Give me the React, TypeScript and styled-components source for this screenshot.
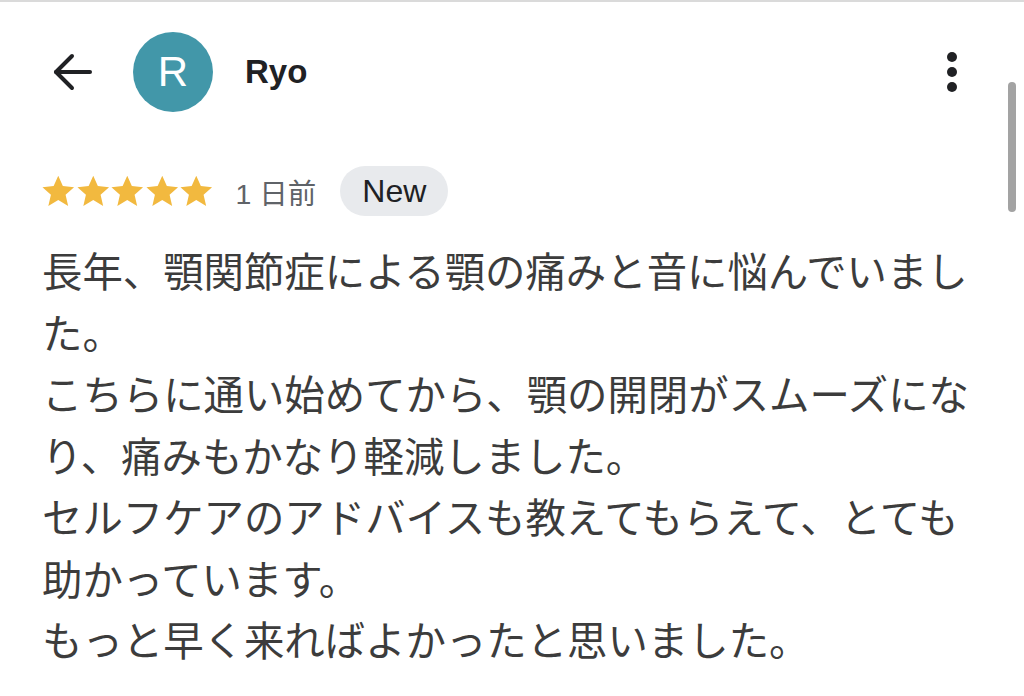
import styled, { createGlobalStyle } from "styled-components";

const GlobalStyle = createGlobalStyle`
  html, body {
    margin: 0;
    padding: 0;
    background: #ffffff;
  }
  body {
    font-family: "Liberation Sans", "Noto Sans CJK JP", sans-serif;
  }
`;

const reviewLines = [
  "長年、顎関節症による顎の痛みと音に悩んでいました。",
  "こちらに通い始めてから、顎の開閉がスムーズになり、痛みもかなり軽減しました。",
  "セルフケアのアドバイスも教えてもらえて、とても助かっています。",
  "もっと早く来ればよかったと思いました。",
];

function Star() {
  return (
    <StarIcon viewBox="0 0 24 24" aria-hidden>
      <path d="M12 1.2l3.2 7.2 7.8.8-5.9 5.2 1.8 7.8L12 18.1l-6.9 4.1 1.8-7.8L1 9.2l7.8-.8z" />
    </StarIcon>
  );
}

export default function App() {
  return (
    <>
      <GlobalStyle />
      <Page>
        <Header>
          <BackButton aria-label="戻る">
            <svg viewBox="0 0 40 40" width="40" height="40" fill="none" stroke="#202124" strokeWidth="4" strokeLinecap="round" strokeLinejoin="round">
              <path d="M38 20H4" />
              <path d="M20 4L4 20l16 16" />
            </svg>
          </BackButton>
          <Avatar>R</Avatar>
          <UserName>Ryo</UserName>
          <MenuButton aria-label="メニュー">
            <Dot />
            <Dot />
            <Dot />
          </MenuButton>
        </Header>

        <MetaRow>
          <Stars>
            {[0, 1, 2, 3, 4].map((i) => (
              <Star key={i} />
            ))}
          </Stars>
          <PostedAt>1 日前</PostedAt>
          <NewBadge>New</NewBadge>
        </MetaRow>

        <ReviewText>
          {reviewLines.map((line) => (
            <p key={line}>{line}</p>
          ))}
        </ReviewText>

        <ScrollThumb />
      </Page>
    </>
  );
}

const Page = styled.div`
  position: relative;
  width: 1024px;
  height: 696px;
  overflow: hidden;
  box-sizing: border-box;
  border-top: 2px solid #dadada;
  padding: 0 48px 0 42px;
`;

const Header = styled.div`
  display: flex;
  align-items: center;
  height: 80px;
  margin-top: 30px;
`;

const BackButton = styled.div`
  display: flex;
  align-items: center;
  justify-content: center;
  width: 40px;
  height: 40px;
  margin-left: 10px;
  margin-right: 41px;
`;

const Avatar = styled.div`
  display: flex;
  align-items: center;
  justify-content: center;
  width: 80px;
  height: 80px;
  border-radius: 50%;
  background: #4297a9;
  color: #ffffff;
  font-family: "Liberation Sans", sans-serif;
  font-size: 42px;
  font-weight: 400;
`;

const UserName = styled.div`
  margin-left: 32px;
  font-family: "Liberation Sans", sans-serif;
  font-size: 33px;
  font-weight: 700;
  color: #202124;
`;

const MenuButton = styled.div`
  margin-left: auto;
  margin-right: 19px;
  display: flex;
  flex-direction: column;
  align-items: center;
  gap: 5px;
`;

const Dot = styled.span`
  width: 10px;
  height: 10px;
  border-radius: 50%;
  background: #202124;
`;

const MetaRow = styled.div`
  display: flex;
  align-items: center;
  height: 50px;
  margin-top: 54px;
`;

const Stars = styled.div`
  display: flex;
  margin-left: -1px;
`;

const StarIcon = styled.svg`
  width: 34.5px;
  height: 34.5px;
  fill: #f2b93f;
`;

const PostedAt = styled.span`
  margin-left: 22px;
  font-family: "Liberation Sans", "Noto Sans CJK JP", sans-serif;
  font-size: 28.5px;
  color: #5f6368;
`;

const NewBadge = styled.span`
  display: inline-flex;
  align-items: center;
  justify-content: center;
  height: 50px;
  padding: 0 22px;
  margin-left: 24px;
  border-radius: 25px;
  background: #e8eaed;
  font-family: "Liberation Sans", sans-serif;
  font-size: 32px;
  color: #202124;
`;

const ReviewText = styled.div`
  margin-top: 23px;
  width: 950px;
  font-family: "Noto Sans CJK JP", sans-serif;
  font-size: 40.4px;
  line-height: 61.5px;
  color: #3c3c3c;

  p {
    margin: 0;
  }
`;

const ScrollThumb = styled.div`
  position: absolute;
  top: 80px;
  right: 8px;
  width: 8px;
  height: 130px;
  border-radius: 4px;
  background: #a3a3a3;
`;
